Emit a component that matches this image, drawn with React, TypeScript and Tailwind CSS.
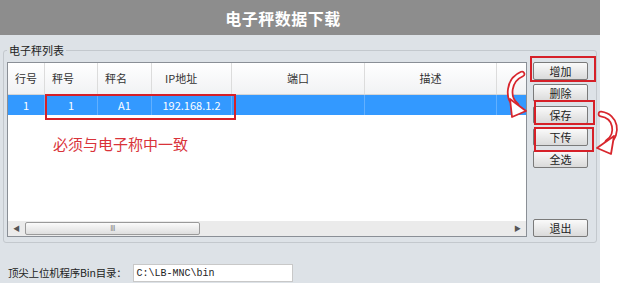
import React from 'react'

const columns = [
  { label: '行号', w: 'w-[37px]', align: 'justify-center' },
  { label: '秤号', w: 'w-[53px]', align: 'justify-start pl-[7px]' },
  { label: '秤名', w: 'w-[54px]', align: 'justify-start pl-[7px]' },
  { label: 'IP地址', w: 'w-[80px]', align: 'justify-start pl-[13px]' },
  { label: '端口', w: 'w-[133px]', align: 'justify-center' },
  { label: '描述', w: 'w-[132px]', align: 'justify-center' },
]

const row = ['1', '1', 'A1', '192.168.1.2', '', '']

const buttons = ['增加', '删除', '保存', '下传', '全选']

function Btn({ children, className = '' }: { children: React.ReactNode; className?: string }) {
  return (
    <button
      className={`w-[55px] h-[18px] flex items-center justify-center border border-[#7a7a7a] rounded-[2px] bg-gradient-to-b from-[#fafafa] to-[#dadada] text-[11px] leading-none text-[#222] ${className}`}
    >
      {children}
    </button>
  )
}

// outlined red curved arrow, drawn as a thick red stroke with a white core
function CurvedArrow({ d, head, className }: { d: string; head: string; className: string }) {
  return (
    <svg className={className} viewBox="0 0 26 50" fill="none">
      <path d={d} stroke="#d8262d" strokeWidth="6.5" strokeLinecap="round" />
      <path d={d} stroke="#ffffff" strokeWidth="3" strokeLinecap="round" />
      <polygon points={head} fill="#ffffff" stroke="#d8262d" strokeWidth="1.8" strokeLinejoin="round" />
    </svg>
  )
}

export default function App() {
  return (
    <div
      className="w-[627px] h-[283px] bg-white flex overflow-hidden"
      style={{ fontFamily: '"Noto Sans CJK SC", "Noto Sans", sans-serif' }}
    >
      <div className="relative w-[600px] h-full bg-[#dde2e7] flex flex-col">
        {/* Title bar */}
        <div className="h-[35px] bg-[#8d8d8d] flex items-center justify-center pr-[34px] text-white font-bold text-[16px] tracking-[0.5px]">
          电子秤数据下载
        </div>

        {/* Group box */}
        <div className="relative mt-[15px] ml-[3px] w-[594px] h-[193px] border border-[#c3c8cd] rounded-[3px] pt-[11px] pl-[3px] flex gap-[6px]">
          <span className="absolute top-[-9px] left-[3px] px-[2px] bg-[#dde2e7] text-[11px] leading-[16px] text-[#222]">
            电子秤列表
          </span>

          {/* List view */}
          <div className="w-[520px] h-[175px] border border-[#8a8f96] bg-white flex flex-col">
            <div className="h-[32px] flex bg-gradient-to-b from-white to-[#f1f2f4] border-b border-[#d5d5d5]">
              {columns.map((c) => (
                <div
                  key={c.label}
                  className={`${c.w} ${c.align} h-full flex items-center border-r border-[#dcdcdc] text-[11px] text-[#333]`}
                >
                  {c.label}
                </div>
              ))}
              <div className="flex-1" />
            </div>
            <div className="h-[20px] flex bg-[#3399ff]">
              {columns.map((c, i) => (
                <div
                  key={c.label}
                  className={`${c.w} h-full flex items-center justify-center border-r border-[#62b0ff] text-[11px] text-white`}
                >
                  {row[i]}
                </div>
              ))}
              <div className="flex-1" />
            </div>
            <div className="flex-1" />
            {/* horizontal scrollbar */}
            <div className="h-[15px] flex items-center bg-[#ebebeb]">
              <span className="w-[17px] text-center text-[7px] text-[#555]">◀</span>
              <div className="w-[175px] h-[13px] border border-[#9a9a9a] rounded-[2px] bg-gradient-to-b from-[#fbfbfb] to-[#dedede] flex items-center justify-center">
                <span className="text-[7px] leading-none text-[#777] tracking-[-0.5px]">III</span>
              </div>
              <div className="flex-1" />
              <span className="w-[17px] text-center text-[7px] text-[#555]">▶</span>
            </div>
          </div>

          {/* Buttons */}
          <div className="h-[175px] flex flex-col gap-[4px]">
            {buttons.map((b) => (
              <Btn key={b}>{b}</Btn>
            ))}
            <Btn className="mt-auto">退出</Btn>
          </div>
        </div>

        {/* Bin directory */}
        <div className="mt-[21px] pl-[8px] flex items-center h-[18px]">
          <span className="text-[10.5px] text-[#222] tracking-[-0.2px]">顶尖上位机程序Bin目录：</span>
          <div
            className="ml-[6px] w-[160px] h-[18px] bg-white border border-[#c8c8c8] flex items-center pl-[3px] text-[10px] text-[#222]"
            style={{ fontFamily: '"Liberation Mono", monospace' }}
          >
            C:\LB-MNC\bin
          </div>
        </div>

        {/* Annotations */}
        <div className="absolute left-[45px] top-[94px] w-[191px] h-[26px] border-2 border-[#d62028]" />
        <div className="absolute left-[53px] top-[135px] text-[15px] leading-[18px] text-[#d9333a]">
          必须与电子称中一致
        </div>
        <div className="absolute left-[530px] top-[56px] w-[66px] h-[26px] border-2 border-[#d62028]" />
        <div className="absolute left-[534px] top-[100px] w-[61px] h-[25px] border-2 border-[#d62028]" />
        <div className="absolute left-[534px] top-[127px] w-[60px] h-[25px] border-2 border-[#d62028]" />

        <CurvedArrow
          className="absolute left-[502px] top-[68px] w-[26px] h-[50px]"
          d="M20 6 C 6 12, 5 30, 14 37"
          head="8,31 24,43 10,49"
        />
        <CurvedArrow
          className="absolute left-[596px] top-[106px] w-[26px] h-[50px]"
          d="M5 8 C 20 10, 23 28, 12 36"
          head="18,30 1,42 15,48"
        />
      </div>
    </div>
  )
}
